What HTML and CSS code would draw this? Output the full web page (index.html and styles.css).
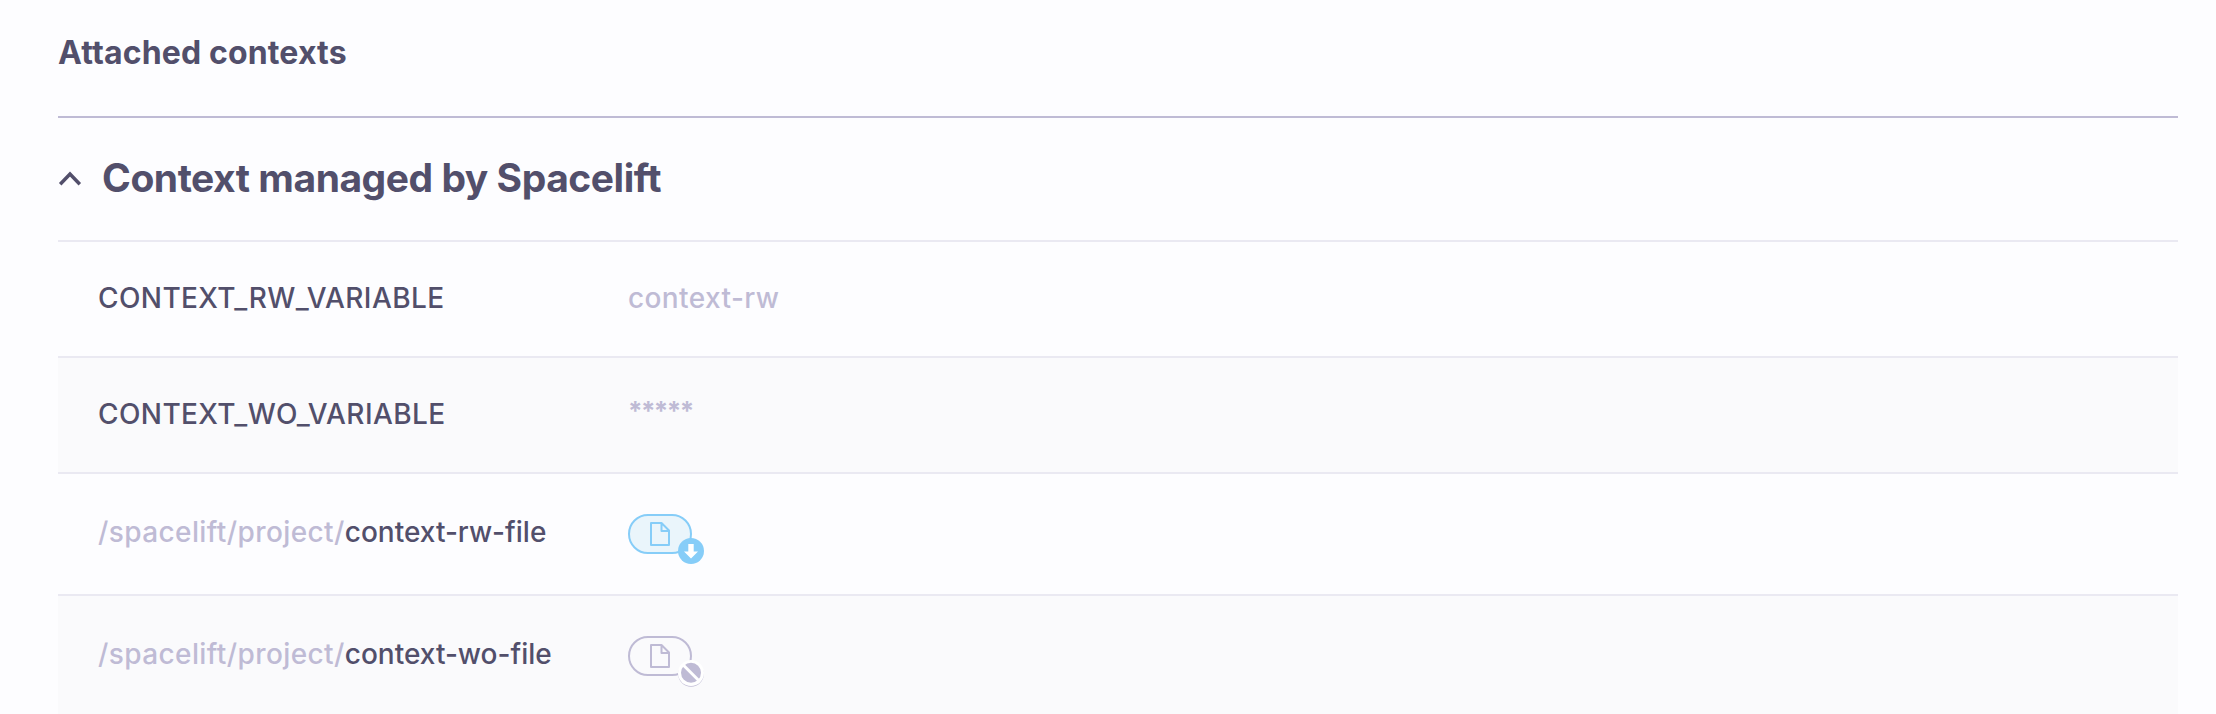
FILE: index.html
```
<!DOCTYPE html>
<html lang="en">
<head>
<meta charset="utf-8">
<title>Attached contexts</title>
<link rel="stylesheet" href="styles.css">
</head>
<body>
<main class="contexts">
  <h1 class="title">Attached contexts</h1>
  <section class="context">
    <header class="context-header">
      <svg class="chevron" width="24" height="16" viewBox="0 0 24 16"><path d="M2.200 13.200 12 3l9.800 10.200"/></svg>
      <h2 class="context-name">Context managed by Spacelift</h2>
    </header>
    <div class="row">
      <div class="key">CONTEXT_RW_VARIABLE</div>
      <div class="value">context-rw</div>
    </div>
    <div class="row shaded">
      <div class="key">CONTEXT_WO_VARIABLE</div>
      <div class="value stars">*****</div>
    </div>
    <div class="row file">
      <div class="key"><span class="path">/spacelift/project/</span><span class="name">context-rw-file</span></div>
      <div class="pill readable">
        <svg width="20" height="24" viewBox="0 0 20 24"><path d="M1 1h10.500L19 8.500V23H1zM11.500 1v8H19"/></svg>
        <svg class="badge" width="26" height="27" viewBox="0 0 26 27"><circle class="disc" cx="13" cy="13" r="13"/><path class="arrow" d="M10.300 6h5.400v7.500H20l-7 7-7-7h4.300z"/></svg>
      </div>
    </div>
    <div class="row file shaded">
      <div class="key"><span class="path">/spacelift/project/</span><span class="name">context-wo-file</span></div>
      <div class="pill">
        <svg width="20" height="24" viewBox="0 0 20 24"><path d="M1 1h10.500L19 8.500V23H1zM11.500 1v8H19"/></svg>
        <svg class="badge" width="26" height="27" viewBox="0 0 26 27"><circle class="disc" cx="13" cy="14" r="12.800"/><circle class="ring" cx="13" cy="13" r="13"/><circle class="disc" cx="13" cy="12.700" r="10"/><path class="slash" d="M5 4.700 21 20.700"/></svg>
      </div>
    </div>
  </section>
</main>
</body>
</html>
```
FILE: styles.css
```
* { box-sizing: border-box; }
body {
  margin: 0;
  background: #fdfdff;
  color: #524f6b;
  font: 500 28px/40px Inter, "Liberation Sans", sans-serif;
}
.contexts { height: 714px; overflow: hidden; padding: 0 38px 0 58px; }
.title {
  margin: 0;
  height: 118px;
  padding-top: 33px;
  border-bottom: 2px solid #bfbbd5;
  font-size: 32px;
  font-weight: 700;
  letter-spacing: 0.15px;
}
.context-header {
  display: flex;
  align-items: center;
  gap: 20px;
  height: 122px;
}
.chevron { fill: none; stroke: #524f6b; stroke-width: 3.5; }
.context-name {
  margin: 0;
  padding-bottom: 2px;
  font-size: 39px;
  font-weight: 700;
  letter-spacing: -0.47px;
}
.row {
  display: flex;
  align-items: center;
  height: 116px;
  padding-left: 40px;
  border-top: 2px solid #eae9f2;
}
.row.file { height: 122px; }
.shaded { background: #fafafc; }
.key, .value { padding-bottom: 2px; white-space: nowrap; letter-spacing: 0.4px; }
.key { width: 530px; }
.file .key { padding-bottom: 4px; }
.name { letter-spacing: 0; }
.path, .value { color: #bfbbd5; }
.value.stars { padding-bottom: 8px; font-size: 26px; font-weight: 700; letter-spacing: -1.6px; }
.pill {
  position: relative;
  display: flex;
  align-items: center;
  justify-content: center;
  width: 64px;
  height: 40px;
  border: 2px solid #bfbbd5;
  border-radius: 20px;
  color: #bfbbd5;
}
.pill svg { fill: none; stroke: currentColor; stroke-width: 2; stroke-linejoin: round; }
.readable { background: #eaf5fb; color: #86cdf8; border-color: #86cdf8; }
.pill .badge { position: absolute; left: 48px; top: 22px; stroke: none; }
.pill .disc { fill: currentColor; }
.pill .arrow, .pill .ring { fill: #fff; }
.pill .slash { stroke: #fff; stroke-width: 3; }
```
